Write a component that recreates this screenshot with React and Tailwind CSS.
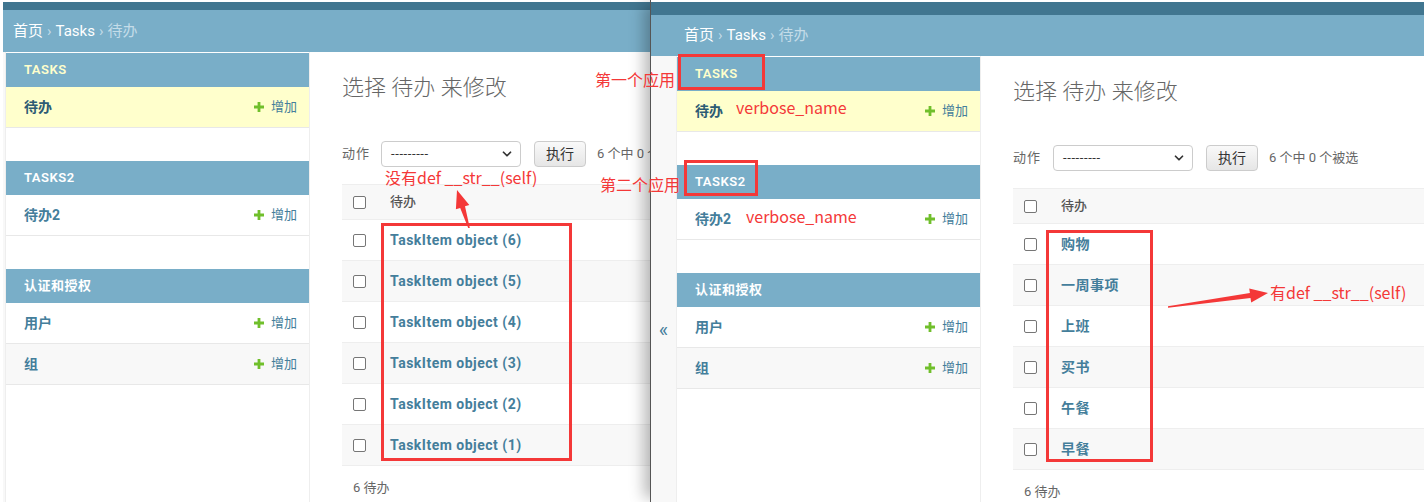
import React from "react";
import { ChevronDown } from "lucide-react";

const leftRows = [
  "TaskItem object (6)",
  "TaskItem object (5)",
  "TaskItem object (4)",
  "TaskItem object (3)",
  "TaskItem object (2)",
  "TaskItem object (1)",
];
const rightRows = ["购物", "一周事项", "上班", "买书", "午餐", "早餐"];

const modules = [
  { title: "Tasks", current: true, models: ["待办"] },
  { title: "Tasks2", models: ["待办2"] },
  { title: "认证和授权", models: ["用户", "组"] },
];

function AddIcon() {
  return (
    <svg width="10" height="10" viewBox="0 0 10 10" className="shrink-0">
      <path d="M3.6 0h2.8v3.6H10v2.8H6.4V10H3.6V6.4H0V3.6h3.6z" fill="#70bf2b" />
    </svg>
  );
}

function Checkbox() {
  return <span className="block w-[13px] h-[13px] rounded-[2px] border border-[#767676] bg-white" />;
}

function AppModule({ title, current, models }) {
  return (
    <div className="mb-[33px]">
      <div
        className={`h-[34px] flex items-center pl-[18px] bg-[#79aec8] text-[13px] font-semibold tracking-[0.5px] uppercase ${
          current ? "text-[#ffffcc]" : "text-white"
        }`}
      >
        {title}
      </div>
      {models.map((name, i) => (
        <div
          key={name}
          className={`h-[41px] flex items-center justify-between pl-[18px] pr-[12px] border-b border-[#e8e8e8] ${
            current ? "bg-[#ffffcc]" : i % 2 ? "bg-[#f8f8f8]" : "bg-white"
          }`}
        >
          <span className={`text-[14px] font-bold ${current ? "text-[#2d5c74]" : "text-[#447e9b]"}`}>{name}</span>
          <span className="flex items-center gap-[7px] text-[13px] text-[#447e9b]">
            <AddIcon />
            增加
          </span>
        </div>
      ))}
    </div>
  );
}

function Screen({ darkH, crumbH, crumbPl, toggleW, showToggle, rows }) {
  return (
    <div className="flex flex-col h-full pt-[2px]">
      <div className="bg-[#417690]" style={{ height: darkH }} />
      <div
        className="bg-[#79aec8] flex items-center text-[15px] text-[#c4dce8] whitespace-nowrap"
        style={{ height: crumbH, paddingLeft: crumbPl }}
      >
        <span className="text-white">首页</span>
        <span className="mx-[4px]">›</span>
        <span className="text-white">Tasks</span>
        <span className="mx-[4px]">›</span>
        <span>待办</span>
      </div>
      <div className="flex flex-1 min-h-0">
        <div
          className="shrink-0 bg-[#f8f8f8] border-r border-[#eee] flex justify-center"
          style={{ width: toggleW }}
        >
          {showToggle && <span className="pt-[262px] text-[20px] leading-[24px] text-[#447e9b]">«</span>}
        </div>
        <div className="w-[304px] shrink-0 border-r border-[#eee] pt-px">
          {modules.map((m) => (
            <AppModule key={m.title} {...m} />
          ))}
        </div>
        <div className="flex-1 min-w-0 pl-[32px] pt-[22px]">
          <h1 className="text-[22px] leading-[28px] font-light text-[#666] whitespace-nowrap">选择 待办 来修改</h1>
          <div className="mt-[39px] h-[26px] flex items-center whitespace-nowrap text-[13px] text-[#666]">
            <span className="w-[29px] tracking-[1px]">动作</span>
            <div className="ml-[11px] shrink-0 w-[140px] h-[26px] border border-[#ccc] rounded-[4px] bg-white flex items-center justify-between pl-[9px] pr-[6px] text-[#333]">
              <span className="tracking-[0.6px]">---------</span>
              <ChevronDown size={14} strokeWidth={3} />
            </div>
            <div className="ml-[13px] shrink-0 w-[52px] h-[26px] border border-[#ccc] rounded-[4px] bg-gradient-to-b from-[#f9f9f9] to-[#e6e6e6] flex items-center justify-center text-[14px] text-[#333]">
              执行
            </div>
            <span className="ml-[11px]">6 个中 0 个被选</span>
          </div>
          <div className="mt-[17px] w-[700px]">
            <div className="h-[36px] flex items-center border-t border-b border-[#eee] bg-[#f8f8f8]">
              <div className="w-[48px] pl-[11px]">
                <Checkbox />
              </div>
              <span className="text-[13px] font-medium text-[#555]">待办</span>
            </div>
            {rows.map((r, i) => (
              <div
                key={r}
                className={`h-[41px] flex items-center border-b border-[#eee] ${i % 2 ? "bg-[#f8f8f8]" : "bg-white"}`}
              >
                <div className="w-[48px] pl-[11px]">
                  <Checkbox />
                </div>
                <span className="text-[14px] font-bold tracking-[0.5px] text-[#447e9b]">{r}</span>
              </div>
            ))}
          </div>
          <div className="mt-[13px] pl-[11px] text-[13px] leading-[18px] text-[#666]">6 待办</div>
        </div>
      </div>
    </div>
  );
}

function Note({ className, children }) {
  return (
    <span className={`absolute text-[16px] leading-[22px] text-[#f43838] whitespace-nowrap ${className}`}>
      {children}
    </span>
  );
}

export default function App() {
  return (
    <div className="relative w-[1424px] h-[502px] overflow-hidden bg-white flex font-['Roboto','Noto_Sans_CJK_SC',sans-serif]">
      <div className="w-[650px] shrink-0 h-full overflow-hidden pl-[3px]">
        <Screen darkH={8} crumbH={42} crumbPl={10} toggleW={3} rows={leftRows} />
      </div>
      <div className="relative z-10 w-[774px] shrink-0 h-full overflow-hidden border-l border-[#555] bg-white shadow-[-10px_0_14px_-4px_rgba(0,0,0,0.28)]">
        <Screen darkH={13} crumbH={41} crumbPl={33} toggleW={26} showToggle rows={rightRows} />
      </div>

      <div className="absolute inset-0 z-20 pointer-events-none font-['Noto_Sans_CJK_SC',sans-serif]">
        <div className="absolute left-[678px] top-[54px] w-[87px] h-[36px] border-[3px] border-[#f43838]" />
        <div className="absolute left-[684px] top-[160px] w-[74px] h-[36px] border-[3px] border-[#f43838]" />
        <div className="absolute left-[381px] top-[223px] w-[191px] h-[238px] border-[3px] border-[#f43838]" />
        <div className="absolute left-[1046px] top-[230px] w-[107px] h-[232px] border-[3px] border-[#f43838]" />
        <Note className="left-[595px] top-[68px]">第一个应用</Note>
        <Note className="left-[600px] top-[173px]">第二个应用</Note>
        <Note className="left-[385px] top-[166px]">没有def __str__(self)</Note>
        <Note className="left-[736px] top-[96px]">verbose_name</Note>
        <Note className="left-[746px] top-[205px]">verbose_name</Note>
        <Note className="left-[1270px] top-[281px]">有def __str__(self)</Note>
        <svg className="absolute inset-0" width="1424" height="502">
          <polygon
            points="469.8,228 465,206.3 469.3,204.9 457,190 455.9,209.3 460.2,207.9 468.2,228"
            fill="#f43838"
          />
          <polygon
            points="1168,306.3 1249.9,293 1249.2,288.6 1268,293 1251.2,302.4 1250.5,298 1168,307.7"
            fill="#f43838"
          />
        </svg>
      </div>
    </div>
  );
}
